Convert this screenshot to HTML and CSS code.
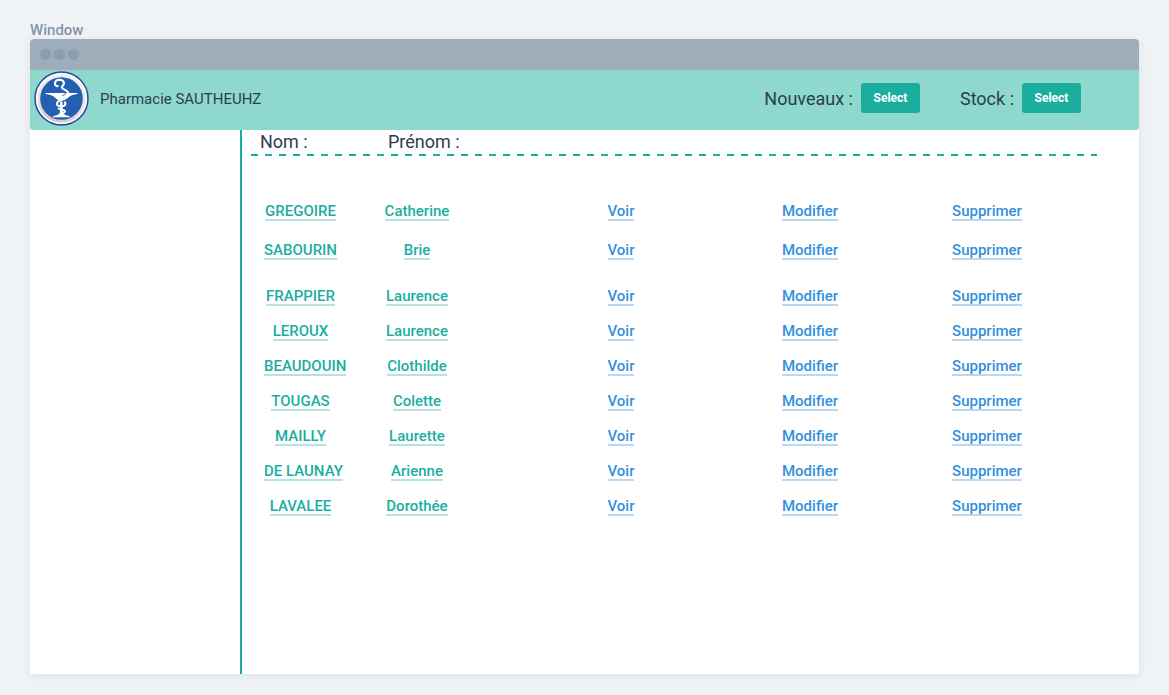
FILE: index.html
```html
<!DOCTYPE html>
<html lang="fr">
<head>
<meta charset="utf-8">
<meta name="viewport" content="width=device-width, initial-scale=1">
<title>Pharmacie SAUTHEUHZ</title>
<link rel="stylesheet" href="styles.css">
</head>
<body>
<div class="caption">Window</div>
<div class="window">
  <div class="titlebar"><span class="dot"></span><span class="dot"></span><span class="dot"></span></div>
  <header class="header">
    <svg class="logo" viewBox="0 0 55 55" aria-hidden="true">
      <defs>
        <linearGradient id="ring" x1="0.6" y1="0" x2="0.3" y2="1">
          <stop offset="0" stop-color="#f4f2f2"/>
          <stop offset="0.6" stop-color="#e6e2e3"/>
          <stop offset="1" stop-color="#c4bdc0"/>
        </linearGradient>
      </defs>
      <circle cx="27.5" cy="27.5" r="26.5" fill="url(#ring)" stroke="#24509a" stroke-width="1.5"/>
      <circle cx="27.5" cy="27.5" r="24.6" fill="none" stroke="#fff" stroke-width="1.4"/>
      <circle cx="27.5" cy="27.5" r="21.3" fill="#255fb1"/>
      <path d="M11.5 22H43.500V23Q37 23.500 34 26.800Q31.500 29.500 28.600 30V41Q28.800 44 35.500 45V46.200H19V45Q25.800 44 26 41V30Q23.500 29.500 21 26.800Q18 23.500 11.500 23Z" fill="#fff"/>
      <path d="M28.500 24.500C31 24 32.300 22.800 31.300 21M24 31.500C26 30 30 29.800 33 27.800" fill="none" stroke="#255fb1" stroke-width="1"/>
      <path d="M23 15.200C19.500 13.600 20.500 9 25.300 8.800C30 8.800 31.300 12.600 28.500 15C25.500 17.500 32 18.500 34 21.200C36.500 25 31.500 27.500 27 29C21.800 31 21.800 34.600 26 35.300C30 35.800 32.300 34 31 31.300M24.500 37.500C26 39.500 30.500 38 31 40C31 41.500 29 42 27.500 41.800" fill="none" stroke="#fff" stroke-width="2" stroke-linecap="round"/>
      <path d="M21.500 14L25.500 14.800L23 16.500Z" fill="#fff"/>
    </svg>
    <span class="brand">Pharmacie SAUTHEUHZ</span>
    <div class="actions">
      <div class="field"><span id="new-label">Nouveaux :</span><button class="button" type="button" aria-describedby="new-label">Select</button></div>
      <div class="field"><span id="stock-label">Stock :</span><button class="button" type="button" aria-describedby="stock-label">Select</button></div>
    </div>
  </header>
  <div class="content">
    <aside class="sidebar"></aside>
    <main class="main">
      <div class="headings"><span class="heading">Nom :</span><span class="heading">Prénom :</span></div>
      <table class="patients">
        <colgroup><col class="col-name"><col class="col-first"><col class="col-view"><col class="col-edit"><col class="col-delete"></colgroup>
        <tbody>
          <tr class="row-first"><td><a class="link" href="#">GREGOIRE</a></td><td><a class="link" href="#">Catherine</a></td><td><a class="link action" href="#">Voir</a></td><td><a class="link action" href="#">Modifier</a></td><td><a class="link action" href="#">Supprimer</a></td></tr>
          <tr class="row-second"><td><a class="link" href="#">SABOURIN</a></td><td><a class="link" href="#">Brie</a></td><td><a class="link action" href="#">Voir</a></td><td><a class="link action" href="#">Modifier</a></td><td><a class="link action" href="#">Supprimer</a></td></tr>
          <tr><td><a class="link" href="#">FRAPPIER</a></td><td><a class="link" href="#">Laurence</a></td><td><a class="link action" href="#">Voir</a></td><td><a class="link action" href="#">Modifier</a></td><td><a class="link action" href="#">Supprimer</a></td></tr>
          <tr><td><a class="link" href="#">LEROUX</a></td><td><a class="link" href="#">Laurence</a></td><td><a class="link action" href="#">Voir</a></td><td><a class="link action" href="#">Modifier</a></td><td><a class="link action" href="#">Supprimer</a></td></tr>
          <tr><td><a class="link" href="#">BEAUDOUIN</a></td><td><a class="link" href="#">Clothilde</a></td><td><a class="link action" href="#">Voir</a></td><td><a class="link action" href="#">Modifier</a></td><td><a class="link action" href="#">Supprimer</a></td></tr>
          <tr><td><a class="link" href="#">TOUGAS</a></td><td><a class="link" href="#">Colette</a></td><td><a class="link action" href="#">Voir</a></td><td><a class="link action" href="#">Modifier</a></td><td><a class="link action" href="#">Supprimer</a></td></tr>
          <tr><td><a class="link" href="#">MAILLY</a></td><td><a class="link" href="#">Laurette</a></td><td><a class="link action" href="#">Voir</a></td><td><a class="link action" href="#">Modifier</a></td><td><a class="link action" href="#">Supprimer</a></td></tr>
          <tr><td><a class="link" href="#">DE LAUNAY</a></td><td><a class="link" href="#">Arienne</a></td><td><a class="link action" href="#">Voir</a></td><td><a class="link action" href="#">Modifier</a></td><td><a class="link action" href="#">Supprimer</a></td></tr>
          <tr><td><a class="link" href="#">LAVALEE</a></td><td><a class="link" href="#">Dorothée</a></td><td><a class="link action" href="#">Voir</a></td><td><a class="link action" href="#">Modifier</a></td><td><a class="link action" href="#">Supprimer</a></td></tr>
        </tbody>
      </table>
    </main>
  </div>
</div>
</body>
</html>
```
FILE: styles.css
```css
* { box-sizing: border-box; }

body {
  margin: 0;
  min-height: 100vh;
  padding: 21px 30px;
  display: flex;
  flex-direction: column;
  background: #eff3f6;
  color: #2c3e4e;
  font-family: Roboto, "Liberation Sans", sans-serif;
  font-size: 15px;
}

.caption {
  line-height: 18px;
  font-weight: 500;
  color: #8595a5;
}

.window {
  flex: 1;
  display: flex;
  flex-direction: column;
  border-radius: 4px 4px 2px 2px;
  background: #fff;
  box-shadow: 0 2px 8px rgba(44, 62, 78, 0.09);
}

.titlebar {
  display: flex;
  align-items: center;
  gap: 3px;
  height: 31px;
  padding-left: 10px;
  border-radius: 4px 4px 0 0;
  background: #9eadba;
}

.dot {
  width: 11px;
  height: 11px;
  border-radius: 50%;
  background: #8c9dac;
}

.header {
  display: flex;
  align-items: center;
  height: 60px;
  padding: 0 58px 3px 4px;
  border-radius: 0 0 3px 3px;
  background: #8ed8ce;
}

.logo {
  width: 55px;
  height: 55px;
  margin-right: 11px;
}

.actions {
  display: flex;
  gap: 40px;
  margin-left: auto;
  padding-bottom: 1px;
}

.field {
  display: flex;
  align-items: center;
  gap: 8px;
  font-size: 18px;
}

.button {
  width: 59px;
  height: 30px;
  padding: 0;
  border: 0;
  border-radius: 3px;
  background: #1bae9f;
  color: #fff;
  font-family: inherit;
  font-size: 12px;
  font-weight: 700;
}

.content {
  flex: 1;
  display: flex;
}

.sidebar {
  width: 212px;
  border-right: 2px solid #1bae9f;
}

.main {
  flex: 1;
  padding: 0 40px 0 9px;
}

.headings {
  display: grid;
  grid-template-columns: 128px 1fr;
  height: 26px;
  margin-right: 2px;
  padding-left: 9px;
  font-size: 18px;
  line-height: 24px;
  background: repeating-linear-gradient(90deg, #1bae9f 0 7px, transparent 7px 14px) bottom / 100% 2px no-repeat;
}

.patients {
  width: calc(100% - 13px);
  margin: 38px 0 0 13px;
  table-layout: fixed;
  border-collapse: collapse;
  text-align: center;
  white-space: nowrap;
}

.col-name { width: 73px; }
.col-first { width: 160px; }
.col-view { width: 248px; }
.col-edit { width: 130px; }
.col-delete { width: 224px; }

.patients tr { height: 35px; }
.patients .row-first { height: 39px; }
.patients .row-second { height: 46px; }

.patients td {
  padding: 10px 0 0;
  vertical-align: top;
}

.link {
  display: block;
  width: fit-content;
  margin: 0 auto;
  border-bottom: 2px solid #b4e4de;
  color: #1bae9f;
  font-weight: 500;
  line-height: 15px;
  text-decoration: none;
}

.action {
  border-color: #b8d8f3;
  color: #3490dc;
}
```
